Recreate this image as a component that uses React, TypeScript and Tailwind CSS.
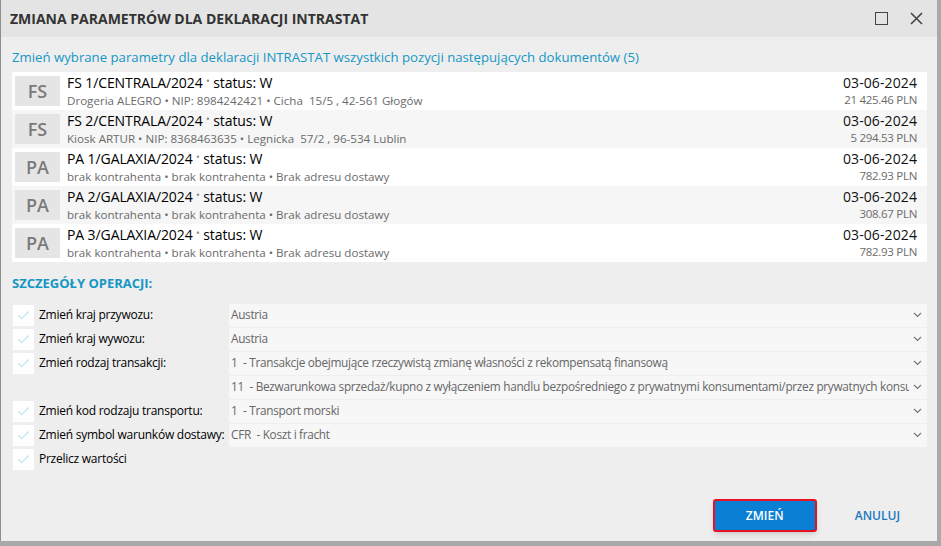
import { FiCheck } from "react-icons/fi";

const docs = [
  { tag: "FS", no: "FS 1/CENTRALA/2024", sub: "Drogeria ALEGRO • NIP: 8984242421 • Cicha  15/5 , 42-561 Głogów", amount: "21 425.46 PLN" },
  { tag: "FS", no: "FS 2/CENTRALA/2024", sub: "Kiosk ARTUR • NIP: 8368463635 • Legnicka  57/2 , 96-534 Lublin", amount: "5 294.53 PLN" },
  { tag: "PA", no: "PA 1/GALAXIA/2024", sub: "brak kontrahenta • brak kontrahenta • Brak adresu dostawy", amount: "782.93 PLN" },
  { tag: "PA", no: "PA 2/GALAXIA/2024", sub: "brak kontrahenta • brak kontrahenta • Brak adresu dostawy", amount: "308.67 PLN" },
  { tag: "PA", no: "PA 3/GALAXIA/2024", sub: "brak kontrahenta • brak kontrahenta • Brak adresu dostawy", amount: "782.93 PLN" },
];

const fields = [
  { label: "Zmień kraj przywozu:", value: "Austria", check: true },
  { label: "Zmień kraj wywozu:", value: "Austria", check: true },
  { label: "Zmień rodzaj transakcji:", value: "1  - Transakcje obejmujące rzeczywistą zmianę własności z rekompensatą finansową", check: true },
  { label: "", value: "11  - Bezwarunkowa sprzedaż/kupno z wyłączeniem handlu bezpośredniego z prywatnymi konsumentami/przez prywatnych konsumentów", check: false },
  { label: "Zmień kod rodzaju transportu:", value: "1  - Transport morski", check: true },
  { label: "Zmień symbol warunków dostawy:", value: "CFR  - Koszt i fracht", check: true },
  { label: "Przelicz wartości", value: null, check: true },
];

function Chevron() {
  return (
    <svg width="9" height="6" viewBox="0 0 9 6" className="shrink-0">
      <path d="M1 1l3.5 3.5L8 1" fill="none" stroke="#777" strokeWidth="1.2" />
    </svg>
  );
}

function Checkbox() {
  return (
    <div className="w-[21px] h-[21px] bg-white flex items-center justify-center shrink-0">
      <FiCheck className="text-[#bfe3f2]" size={15} strokeWidth={1.8} />
    </div>
  );
}

export default function App() {
  return (
    <div
      className="w-[941px] h-[546px] bg-[#a9a9a9] overflow-hidden"
      style={{ fontFamily: '"Open Sans", "Noto Sans", sans-serif' }}
    >
      <div className="w-[937px] h-[541px] bg-[#eeeeee] border-l border-[#8f8f8f] flex flex-col">
        <div className="h-[37px] bg-[#e4e4e4] flex items-center pl-[9px] pr-[14px]">
          <div className="font-bold text-[14px] text-[#333] flex-1">
            ZMIANA PARAMETRÓW DLA DEKLARACJI INTRASTAT
          </div>
          <div className="w-[13px] h-[13px] border-[1.5px] border-[#444] mr-[22px]" />
          <svg width="13" height="13" viewBox="0 0 13 13">
            <path d="M1 1l11 11M12 1L1 12" stroke="#444" strokeWidth="1.6" />
          </svg>
        </div>

        <div className="px-[11px] pt-[12px] text-[13.2px] text-[#1597c5] leading-[17px]">
          Zmień wybrane parametry dla deklaracji INTRASTAT wszystkich pozycji następujących dokumentów (5)
        </div>

        <div className="ml-[11px] mr-[10px] mt-[6px] flex flex-col">
          {docs.map((d, i) => (
            <div
              key={d.no}
              className={`h-[38px] flex items-center pl-[3px] pr-[10px] ${i % 2 === 1 ? "bg-[#f6f6f6]" : "bg-white"}`}
            >
              <div className="w-[45px] h-[30px] bg-[#e5e5e5] flex items-center justify-center font-semibold text-[18px] text-[#7a7a7a]">
                {d.tag}
              </div>
              <div className="ml-[7px] flex-1 flex flex-col">
                <div className="text-[14px] text-black leading-[18px] tracking-[-0.1px]">
                  {d.no} <span className="text-[#888] text-[10px] relative -top-[3px]">•</span> status: W
                </div>
                <div className="text-[11.6px] text-[#6b6b6b] leading-[16px] whitespace-pre">{d.sub}</div>
              </div>
              <div className="flex flex-col items-end">
                <div className="text-[14px] text-[#111] leading-[18px] tracking-[0.1px]">03-06-2024</div>
                <div className="text-[11.5px] text-[#6b6b6b] leading-[16px] tracking-[-0.3px]">{d.amount}</div>
              </div>
            </div>
          ))}
        </div>

        <div className="px-[11px] mt-[12px] font-bold text-[13px] text-[#1597c5] leading-[18px]">
          SZCZEGÓŁY OPERACJI:
        </div>

        <div className="ml-[12px] mr-[10px] mt-[11px] flex flex-col">
          {fields.map((f, i) => (
            <div key={i} className="h-[24px] flex items-center">
              <div className="w-[216px] flex items-center gap-[5px] shrink-0">
                {f.check ? <Checkbox /> : <div className="w-[21px] h-[21px]" />}
                <span className="text-[12px] text-black whitespace-nowrap tracking-[-0.25px]">{f.label}</span>
              </div>
              {f.value !== null && (
                <div className="flex-1 min-w-0 h-[23px] bg-[#f7f7f7] flex items-center pl-[2px] pr-[5px] gap-[4px]">
                  <span className="flex-1 min-w-0 overflow-hidden whitespace-pre text-[11.8px] text-[#666] tracking-[-0.3px]">{f.value}</span>
                  <Chevron />
                </div>
              )}
            </div>
          ))}
        </div>

        <div className="flex-1" />
        <div className="flex items-center justify-end pr-[37px] pb-[9px] gap-[38px]">
          <button className="w-[104px] h-[33px] rounded-[3px] border-2 border-[#e81123] bg-[#0a7fd4] text-white text-[12px] font-semibold shadow-md">
            ZMIEŃ
          </button>
          <button className="text-[12px] font-semibold text-[#1c78c0]">ANULUJ</button>
        </div>
      </div>
    </div>
  );
}
